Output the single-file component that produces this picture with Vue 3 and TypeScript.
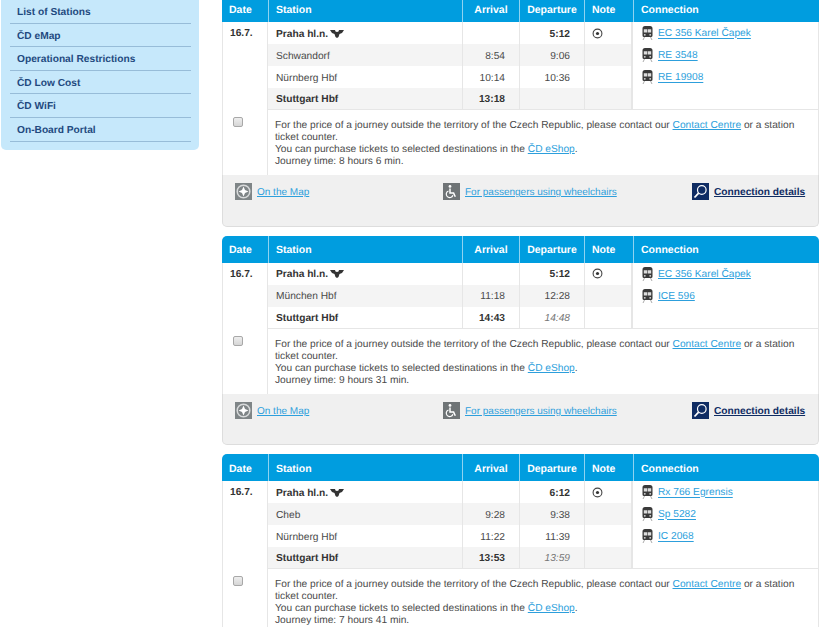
<template>
  <div class="page">
    <aside class="side">
      <ul class="side-menu">
        <li v-for="item in menu" :key="item">{{ item }}</li>
      </ul>
    </aside>

    <main class="results">
      <section v-for="(trip, t) in trips" :key="t" class="card">
        <table class="timetable">
          <colgroup>
            <col class="c-date" />
            <col class="c-station" />
            <col class="c-arr" />
            <col class="c-dep" />
            <col class="c-note" />
            <col class="c-conn" />
          </colgroup>
          <thead>
            <tr>
              <th class="left">Date</th>
              <th class="left">Station</th>
              <th>Arrival</th>
              <th>Departure</th>
              <th class="left">Note</th>
              <th class="left">Connection</th>
            </tr>
          </thead>
          <tbody>
            <tr v-for="(stop, i) in trip.stops" :key="stop.name" :class="{ even: i % 2 === 1, last: i === trip.stops.length - 1 }">
              <td v-if="i === 0" class="date" :rowspan="trip.stops.length">16.7.</td>
              <td class="station" :class="{ strong: stop.bold }">
                {{ stop.name }}
                <svg v-if="i === 0" class="wings" width="14" height="8" viewBox="0 0 14 8">
                  <path d="M0 0h5l.5 1.500L7 2l1.500-.5L9 0h5l-2 3-2.500 1-1 3L7 8 5.500 7l-1-3L2 3z" fill="#333" />
                </svg>
              </td>
              <td class="time" :class="{ strong: stop.bold }">{{ stop.arr }}</td>
              <td class="time" :class="{ strong: stop.depBold, soft: stop.soft }">{{ stop.dep }}</td>
              <td class="note">
                <svg v-if="i === 0" width="11" height="11" viewBox="0 0 11 11">
                  <circle cx="5.500" cy="5.500" r="4.400" fill="none" stroke="#444" stroke-width="1.100" />
                  <circle cx="5.500" cy="5.500" r="1.600" fill="#333" />
                </svg>
              </td>
              <td class="conn">
                <template v-if="stop.train">
                  <svg class="train" width="11" height="14" viewBox="0 0 11 14">
                    <path d="M3 0h5a2.500 2.500 0 0 1 2.500 2.500V9.500A1.500 1.500 0 0 1 9 11H2A1.500 1.500 0 0 1 .5 9.500V2.500A2.500 2.500 0 0 1 3 0z" fill="#3a3a3a" />
                    <path d="M1.800 3.200h3.400v3.400H1.800zM5.800 3.200h3.400v3.400H5.800z" fill="#ddd" />
                    <circle cx="2.800" cy="8.800" r=".9" fill="#ddd" />
                    <circle cx="8.200" cy="8.800" r=".9" fill="#ddd" />
                    <path d="M2.500 11 1 14M8.500 11 10 14" stroke="#aaa" stroke-width="1" />
                  </svg>
                  <a class="link">{{ stop.train }}</a>
                </template>
              </td>
            </tr>
            <tr class="info-row">
              <td class="check-cell"><span class="check"></span></td>
              <td class="info" colspan="5">
                For the price of a journey outside the territory of the Czech Republic, please contact our
                <a class="link">Contact Centre</a> or a station ticket counter.<br />
                You can purchase tickets to selected destinations in the <a class="link">ČD eShop</a>.<br />
                Journey time: {{ trip.time }}.
              </td>
            </tr>
          </tbody>
        </table>

        <div class="actions">
          <div class="action">
            <svg width="17" height="17" viewBox="0 0 17 17">
              <rect width="17" height="17" fill="#7f8587" />
              <circle cx="8.500" cy="8.500" r="6.300" fill="none" stroke="#d8dadb" stroke-width="1.500" />
              <path d="M8.500 3.500 10 7l3.500 1.500L10 10l-1.500 3.500L7 10 3.500 8.500 7 7z" fill="#fff" />
            </svg>
            <a class="link">On the Map</a>
          </div>
          <div class="action">
            <svg width="17" height="17" viewBox="0 0 17 17">
              <rect width="17" height="17" fill="#6f7476" />
              <circle cx="7" cy="3.400" r="1.400" fill="#fff" />
              <path d="M7 5.500v4.600h3.600l1.700 3.600" fill="none" stroke="#fff" stroke-width="1.500" />
              <path d="M5.500 8a3.400 3.400 0 1 0 4.400 4.200" fill="none" stroke="#fff" stroke-width="1.200" />
            </svg>
            <a class="link">For passengers using wheelchairs</a>
          </div>
          <div class="action">
            <svg width="17" height="17" viewBox="0 0 17 17">
              <rect width="17" height="17" fill="#0f2c63" />
              <circle cx="9.800" cy="7" r="4.300" fill="none" stroke="#fff" stroke-width="1.200" />
              <path d="M6.600 10.200 2.500 14.500" stroke="#fff" stroke-width="1.800" />
            </svg>
            <a class="link details">Connection details</a>
          </div>
        </div>
      </section>
    </main>
  </div>
</template>

<script setup lang="ts">
interface Stop {
  name: string
  arr: string
  dep: string
  train?: string
  bold?: boolean
  depBold?: boolean
  soft?: boolean
}

interface Trip {
  time: string
  stops: Stop[]
}

const menu = ['List of Stations', 'ČD eMap', 'Operational Restrictions', 'ČD Low Cost', 'ČD WiFi', 'On-Board Portal']

const trips: Trip[] = [
  {
    time: '8 hours 6 min',
    stops: [
      { name: 'Praha hl.n.', arr: '', dep: '5:12', train: 'EC 356 Karel Čapek', bold: true, depBold: true },
      { name: 'Schwandorf', arr: '8:54', dep: '9:06', train: 'RE 3548' },
      { name: 'Nürnberg Hbf', arr: '10:14', dep: '10:36', train: 'RE 19908' },
      { name: 'Stuttgart Hbf', arr: '13:18', dep: '', bold: true },
    ],
  },
  {
    time: '9 hours 31 min',
    stops: [
      { name: 'Praha hl.n.', arr: '', dep: '5:12', train: 'EC 356 Karel Čapek', bold: true, depBold: true },
      { name: 'München Hbf', arr: '11:18', dep: '12:28', train: 'ICE 596' },
      { name: 'Stuttgart Hbf', arr: '14:43', dep: '14:48', bold: true, soft: true },
    ],
  },
  {
    time: '7 hours 41 min',
    stops: [
      { name: 'Praha hl.n.', arr: '', dep: '6:12', train: 'Rx 766 Egrensis', bold: true, depBold: true },
      { name: 'Cheb', arr: '9:28', dep: '9:38', train: 'Sp 5282' },
      { name: 'Nürnberg Hbf', arr: '11:22', dep: '11:39', train: 'IC 2068' },
      { name: 'Stuttgart Hbf', arr: '13:53', dep: '13:59', bold: true, soft: true },
    ],
  },
]
</script>

<style>
html,
body {
  overflow: hidden;
  background: #fff;
}
</style>

<style scoped>
.page {
  display: flex;
  align-items: flex-start;
  height: 627px;
  overflow: hidden;
  font-family: "Liberation Sans", Arial, sans-serif;
  font-size: 10.2px;
  text-rendering: geometricPrecision;
  color: #4a4a4a;
}

.side {
  width: 198px;
  height: 150px;
  margin-left: 1px;
  padding-left: 9px;
  box-sizing: border-box;
  flex: none;
  background: #c6e8fb;
  border-radius: 0 0 5px 5px;
}
.side-menu {
  list-style: none;
  margin: 0;
  padding: 0;
  width: 181px;
}
.side-menu li {
  height: 23.6px;
  box-sizing: border-box;
  padding: 7px 0 0 7px;
  line-height: 12px;
  font-weight: bold;
  color: #1f4a80;
  border-bottom: 1px solid #97bcd8;
}

.results {
  margin: -5px 0 0 23px;
  width: 597px;
  flex: none;
}
.card {
  margin-bottom: 9px;
  background: #fff;
  border-radius: 5px;
}

.timetable {
  width: 597px;
  table-layout: fixed;
  border-collapse: separate;
  border-spacing: 0;
}
.c-date { width: 46px; }
.c-station { width: 194px; }
.c-arr { width: 57px; }
.c-dep { width: 65px; }
.c-note { width: 49px; }
.c-conn { width: 186px; }

th {
  height: 27px;
  padding: 2px 0 0;
  box-sizing: border-box;
  background: #009ddf;
  color: #fff;
  font-weight: bold;
  font-size: 10.500px;
  line-height: 12px;
  border-left: 1px solid #8fd3f1;
  text-align: center;
  vertical-align: middle;
}
th.left {
  text-align: left;
  padding-left: 7px;
}
th:first-child {
  border-left: 0;
  border-top-left-radius: 5px;
}
th:last-child {
  border-top-right-radius: 5px;
}

td {
  height: 22px;
  padding: 0;
  line-height: 12px;
  box-sizing: border-box;
}
.date {
  vertical-align: top;
  padding: 6px 0 0 7px;
  font-weight: bold;
  color: #333;
  border-left: 1px solid #e6e6e6;
  border-right: 1px solid #e6e6e6;
}
.station {
  padding: 3px 0 0 8px;
}
.strong {
  font-weight: bold;
  color: #333;
}
.wings {
  margin-left: -1px;
  vertical-align: -1px;
}
.time {
  text-align: right;
  padding: 3px 14px 0 0;
  border-left: 1px solid #e6e6e6;
}
.soft {
  font-style: italic;
  font-weight: normal;
  color: #777;
}
.note {
  padding-left: 7px;
  border-left: 1px solid #e6e6e6;
  border-right: 2px solid #e6e6e6;
}
.note svg {
  display: block;
}
.conn {
  padding: 2px 0 0 9px;
  background: #fff;
  border-right: 1px solid #e6e6e6;
}
.even td:not(.date):not(.conn) {
  background: #f4f4f4;
}
.last td:not(.date) {
  border-bottom: 1px solid #e6e6e6;
}
.train {
  vertical-align: middle;
  margin: -1px 5px 0 0;
}

.link {
  color: #2d9fdc;
  text-decoration: underline;
  cursor: pointer;
}

.check-cell {
  vertical-align: top;
  padding: 7px 0 0 10px;
  border-left: 1px solid #e6e6e6;
  border-right: 1px solid #e6e6e6;
}
.check {
  display: block;
  width: 8px;
  height: 8px;
  background: linear-gradient(#eee, #d6d6d6);
  border: 1px solid #a8a8a8;
  border-radius: 2px;
}
.info {
  padding: 10px 8px 7px 7px;
  border-right: 1px solid #e6e6e6;
}

.actions {
  display: grid;
  grid-template-columns: 208px 249px auto;
  height: 51.500px;
  box-sizing: border-box;
  padding: 8px 0 0 12px;
  background: #f0f0f0;
  border: solid #ddd;
  border-width: 0 1px 1px 1px;
  border-radius: 0 0 5px 5px;
}
.action {
  display: flex;
  align-items: flex-start;
  gap: 5px;
}
.action .link {
  font-size: 10px;
  line-height: 19px;
}
.action svg {
  flex: none;
}
.action .details {
  color: #0f2c63;
  font-weight: bold;
  font-size: 10.2px;
}
</style>
